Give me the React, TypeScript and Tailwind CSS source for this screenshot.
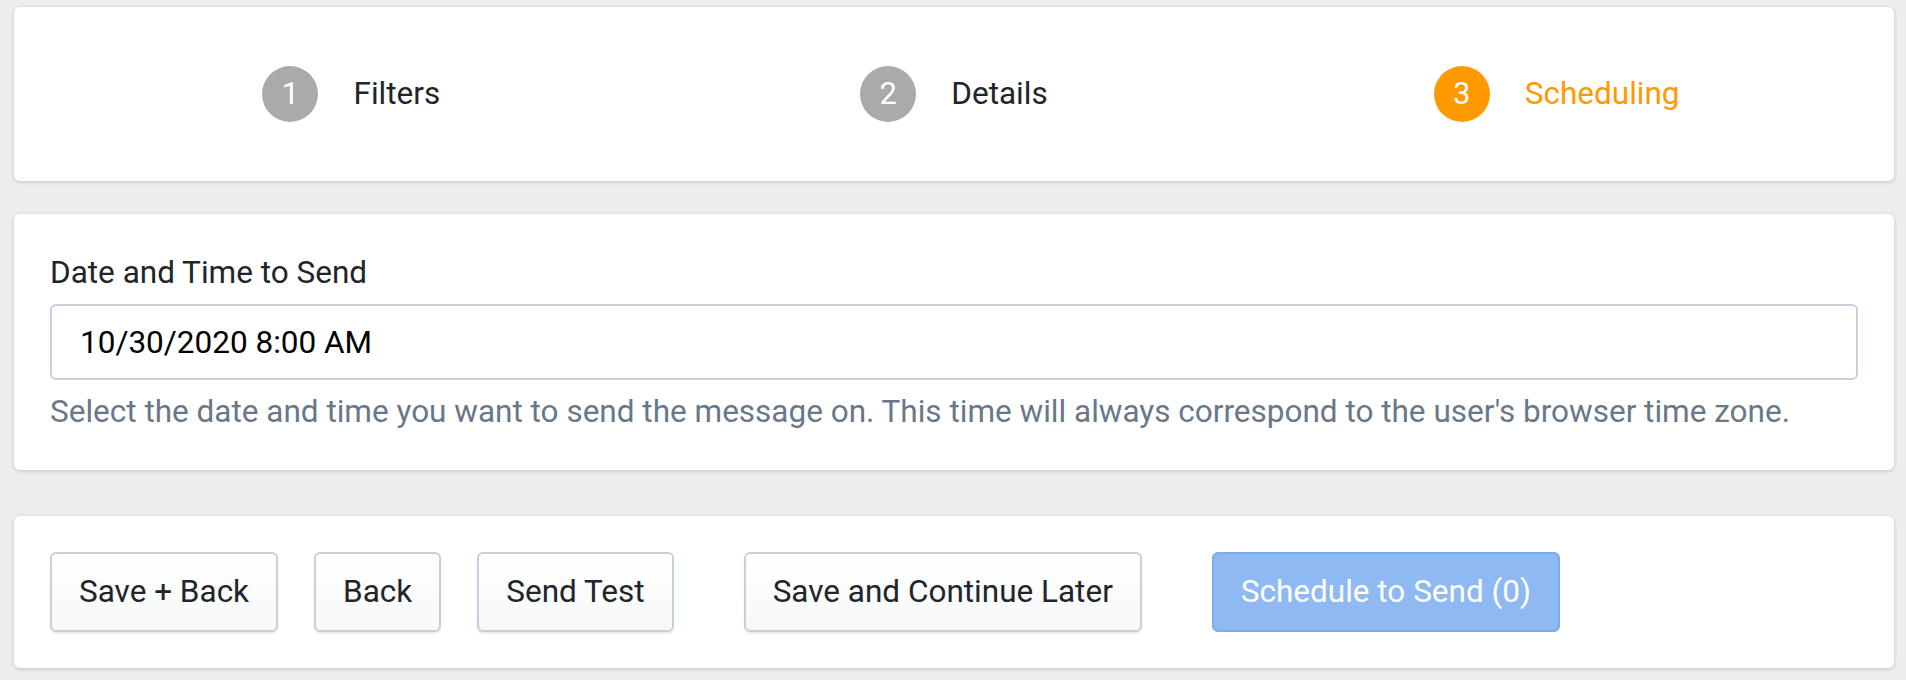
import React from 'react';

const steps = [
  { n: 1, label: 'Filters', active: false },
  { n: 2, label: 'Details', active: false },
  { n: 3, label: 'Scheduling', active: true },
];

const Card: React.FC<{ className?: string; children: React.ReactNode }> = ({ className = '', children }) => (
  <div className={`rounded-[6px] bg-white shadow-[0_1px_4px_rgba(0,0,0,0.18)] ${className}`}>{children}</div>
);

const btn =
  'h-[80px] rounded-[6px] border-2 border-[#c6cfda] bg-gradient-to-b from-white to-[#f7f8f9] px-[27px] text-[31.5px] text-[#212529] shadow-[0_2px_2px_rgba(0,0,0,0.08)]';

export default function App() {
  return (
    <div
      className="min-h-[680px] bg-[#ededed] pl-[14px] pr-[12px] pt-[7px]"
      style={{ fontFamily: 'Roboto, "Liberation Sans", sans-serif' }}
    >
      <Card className="grid h-[174px] grid-cols-3 items-center px-[36px]">
        {steps.map((s) => (
          <div key={s.n} className="flex items-center justify-center">
            <span
              className={`flex h-[56px] w-[56px] items-center justify-center rounded-full text-[31px] text-white ${
                s.active ? 'bg-[#ff9900]' : 'bg-[#aaaaaa]'
              }`}
            >
              {s.n}
            </span>
            <span className={`ml-[35px] text-[31.5px] ${s.active ? 'text-[#ff9900]' : 'text-[#212529]'}`}>{s.label}</span>
          </div>
        ))}
      </Card>

      <Card className="mt-[33px] p-[36px]">
        <label className="block text-[31.5px] leading-[45px] text-[#212529]">Date and Time to Send</label>
        <input
          readOnly
          value="10/30/2020 8:00 AM"
          className="mt-[9px] block h-[76px] w-full rounded-[6px] border-2 border-[#c6cfda] px-[28px] text-[31.5px] text-black outline-none"
        />
        <p className="mt-[9px] text-[31.5px] leading-[45px] text-[#687789]">
          Select the date and time you want to send the message on. This time will always correspond to the user's browser time zone.
        </p>
      </Card>

      <Card className="mt-[46px] flex items-center p-[36px]">
        <button className={btn}>Save + Back</button>
        <button className={`ml-[36px] ${btn}`}>Back</button>
        <button className={`ml-[36px] ${btn}`}>Send Test</button>
        <button className={`ml-[70px] ${btn}`}>Save and Continue Later</button>
        <button className="ml-[70px] h-[80px] rounded-[6px] border-2 border-[#7dabec] bg-[#8fb9f2] px-[27px] text-[31.5px] text-white">
          Schedule to Send (0)
        </button>
      </Card>
    </div>
  );
}
